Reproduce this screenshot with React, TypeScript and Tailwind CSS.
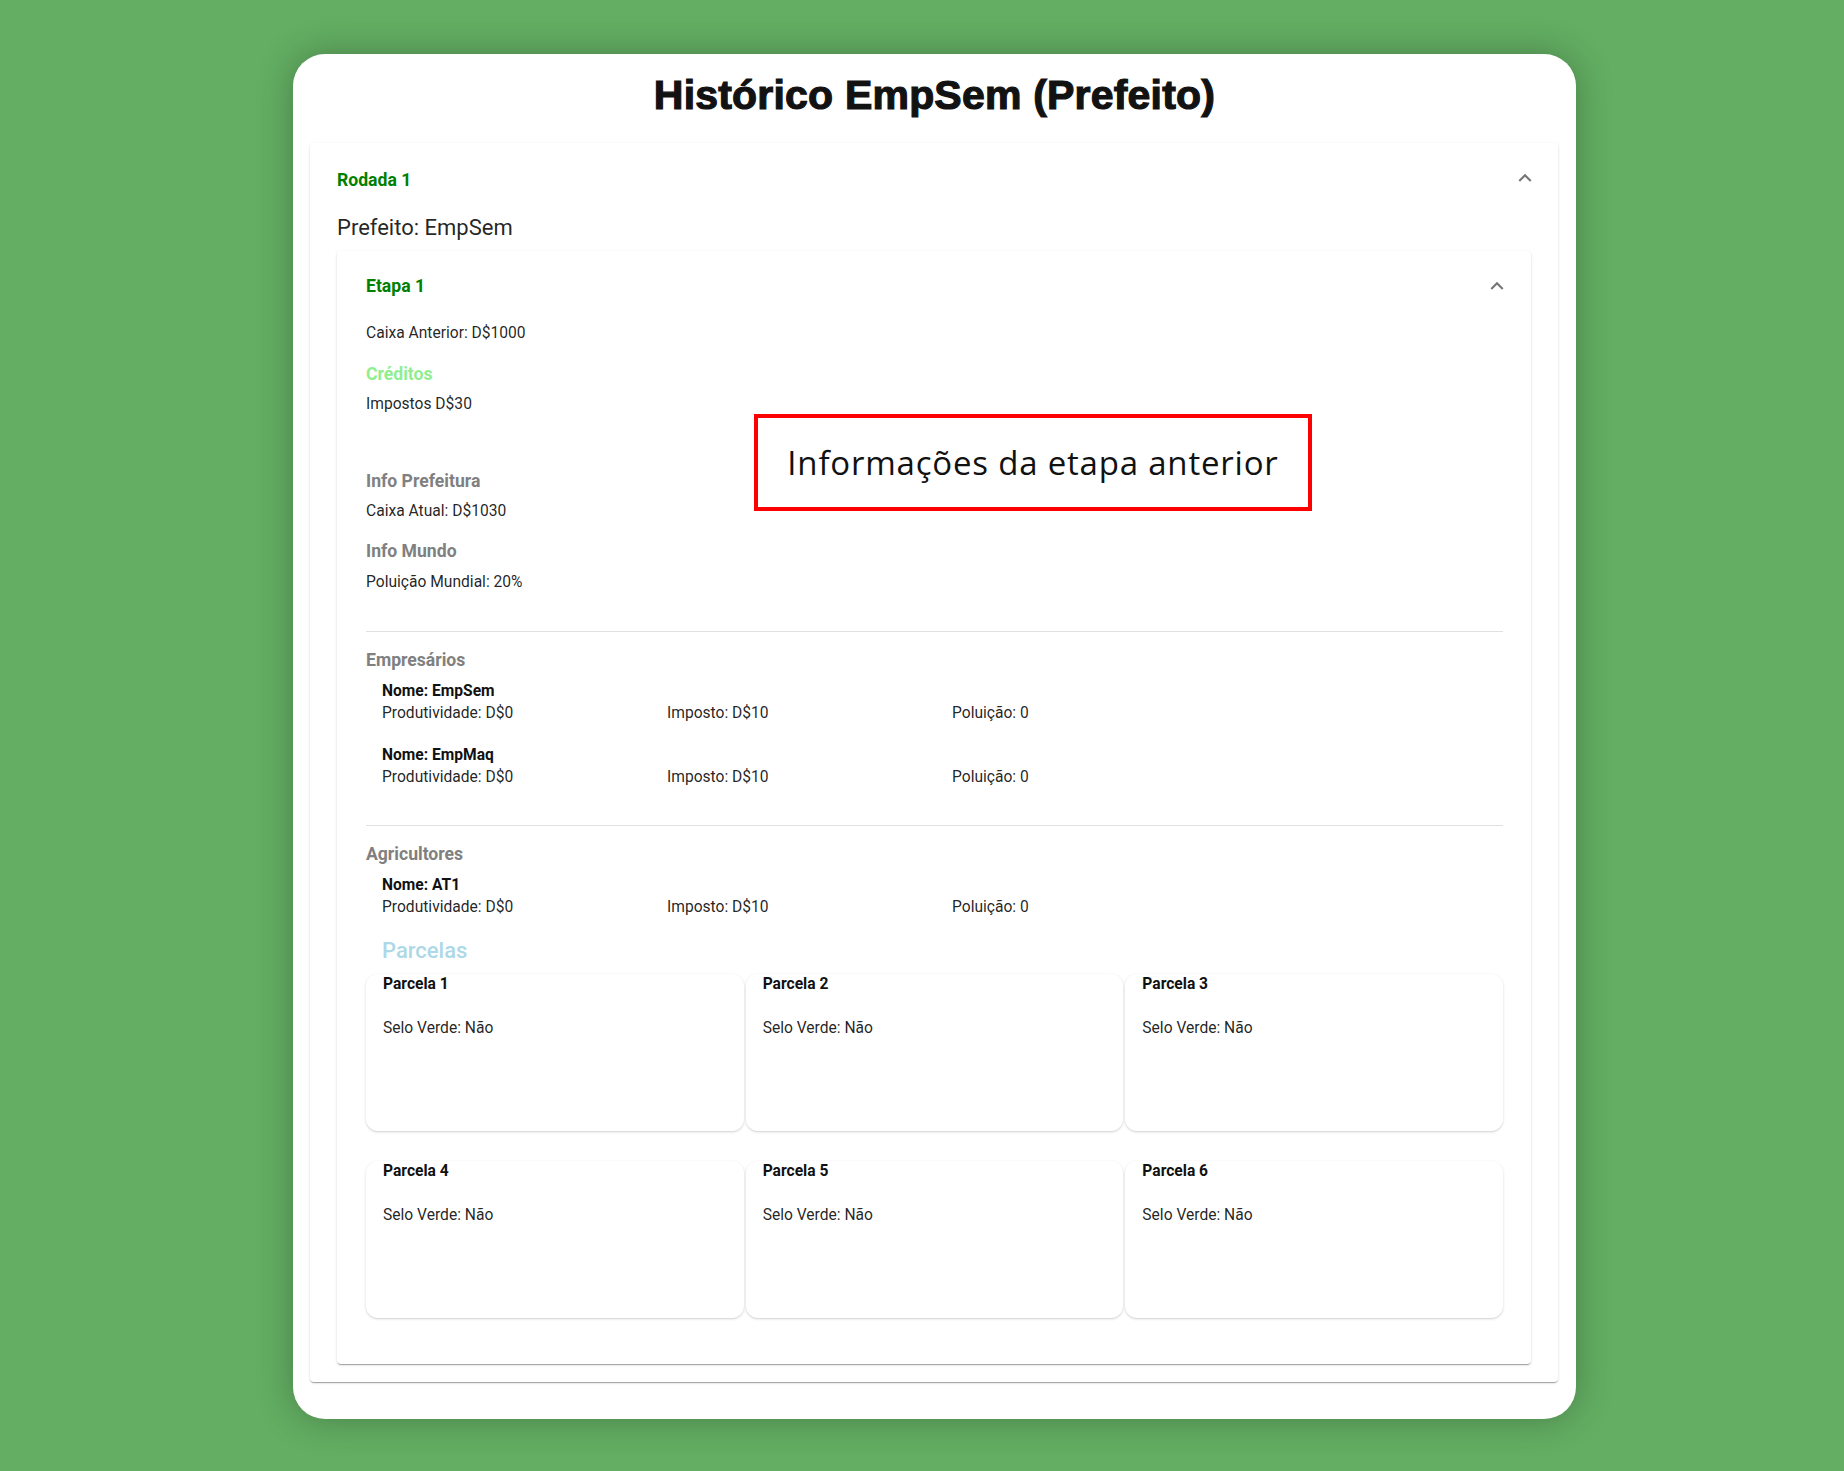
import React from 'react';

const roboto = { fontFamily: 'Roboto, "Noto Sans", sans-serif' };

function ExpandLess() {
  return (
    <svg viewBox="0 0 24 24" className="h-[26px] w-[26px] fill-[rgba(0,0,0,0.54)]">
      <path d="M7.41 15.41 12 10.83l4.59 4.58L18 14l-6-6-6 6z" />
    </svg>
  );
}

const paperShadow =
  'shadow-[0_2px_1px_-1px_rgba(0,0,0,0.2),0_1px_1px_0_rgba(0,0,0,0.14),0_1px_3px_0_rgba(0,0,0,0.12)]';

function PersonRow({ nome, className }: { nome: string; className?: string }) {
  return (
    <div className={'pl-4 text-[15.6px] ' + (className || '')}>
      <div className="font-bold leading-[21px] text-[#111]">Nome: {nome}</div>
      <div className="grid grid-cols-[285px_285px_1fr] leading-[22px] text-[rgba(0,0,0,0.87)]">
        <span>Produtividade: D$0</span>
        <span>Imposto: D$10</span>
        <span>Poluição: 0</span>
      </div>
    </div>
  );
}

function Parcela({ n }: { n: number }) {
  return (
    <div className="h-[157px] rounded-[12px] bg-white px-[17px] pt-[1px] shadow-[0_1px_3px_0_rgba(0,0,0,0.14),0_1px_1px_0_rgba(0,0,0,0.06)]">
      <div className="text-[15.6px] font-bold leading-[18px] text-[#111]">Parcela {n}</div>
      <div className="mt-[25px] text-[15.6px] leading-[20px] text-[rgba(0,0,0,0.87)]">Selo Verde: Não</div>
    </div>
  );
}

export default function App() {
  return (
    <div className="relative min-h-[1471px] bg-[#63ae63] pl-[293px] pt-[54px]" style={roboto}>
      <div className="w-[1283px] rounded-[32px] bg-white px-[17px] pb-[37px] pt-[16px] shadow-[0_0_36px_rgba(0,0,0,0.28)]">
        <h1
          className="mb-[23px] text-center text-[41px] font-bold leading-[50px] tracking-[0.2px] text-[#121212] [-webkit-text-stroke:1.2px_#121212]"
          style={{ fontFamily: '"Liberation Sans", Arial, sans-serif' }}
        >
          Histórico EmpSem (Prefeito)
        </h1>

        {/* Rodada */}
        <div className={'w-[1248px] rounded bg-white px-[27px] pb-[18px] ' + paperShadow}>
          <div className="flex h-[70px] items-center justify-between">
            <span className="pt-[5px] text-[17.6px] font-bold text-[#008000]">Rodada 1</span>
            <span className="-mr-[7px]"><ExpandLess /></span>
          </div>
          <div className="text-[22px] leading-[30px] text-[rgba(0,0,0,0.87)]">Prefeito: EmpSem</div>

          {/* Etapa */}
          <div className={'mt-[8px] rounded bg-white pb-[46px] pl-[29px] pr-[28px] ' + paperShadow}>
            <div className="flex h-[70px] items-center justify-between">
              <span className="pt-[1px] text-[17.6px] font-bold text-[#008000]">Etapa 1</span>
              <span className="-mr-[7px]"><ExpandLess /></span>
            </div>

            <div className="text-[15.6px] leading-[24px] text-[rgba(0,0,0,0.87)]">
              <div>Caixa Anterior: D$1000</div>
              <div className="mt-[17px] text-[17.6px] font-bold text-[#90ee90]">Créditos</div>
              <div className="mt-[6px]">Impostos D$30</div>
              <div className="mt-[53px] text-[17.6px] font-bold text-[#808080]">Info Prefeitura</div>
              <div className="mt-[6px]">Caixa Atual: D$1030</div>
              <div className="mt-[16px] text-[17.6px] font-bold text-[#808080]">Info Mundo</div>
              <div className="mt-[7px]">Poluição Mundial: 20%</div>
            </div>

            <div className="mt-[37px] h-px bg-[#e0e0e0]" />

            <div className="mt-[16px] text-[17.6px] font-bold leading-[24px] text-[#808080]">Empresários</div>
            <PersonRow nome="EmpSem" className="mt-[9px]" />
            <PersonRow nome="EmpMaq" className="mt-[21px]" />

            <div className="mt-[37px] h-px bg-[#e0e0e0]" />

            <div className="mt-[16px] text-[17.6px] font-bold leading-[24px] text-[#808080]">Agricultores</div>
            <PersonRow nome="AT1" className="mt-[9px]" />

            <div className="mt-[17px] pl-4 text-[22px] font-medium leading-[32px] text-[#add8e6]">Parcelas</div>

            <div className="mt-[7px] grid grid-cols-3 gap-x-[2px] gap-y-[30px]">
              {[1, 2, 3, 4, 5, 6].map((n) => (
                <Parcela key={n} n={n} />
              ))}
            </div>
          </div>
        </div>
      </div>

      {/* annotation */}
      <div className="absolute left-[754px] top-[414px] flex h-[97px] w-[558px] items-center justify-center border-[4px] border-[#ff0000] bg-white">
        <span
          className="text-[33px] leading-none tracking-[0.8px] text-[#111]"
          style={{ fontFamily: '"Open Sans", Lato, sans-serif' }}
        >
          Informações da etapa anterior
        </span>
      </div>
    </div>
  );
}
